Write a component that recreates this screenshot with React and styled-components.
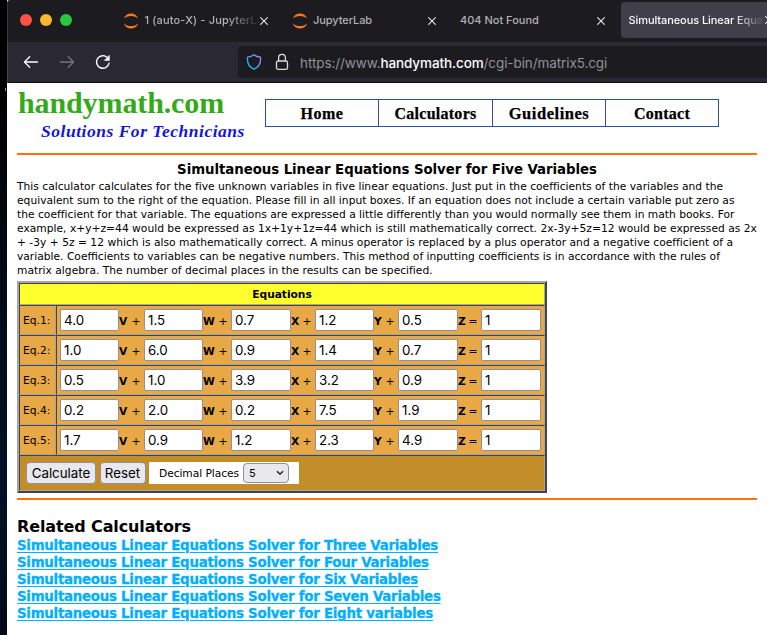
import React from "react";
import styled, { createGlobalStyle } from "styled-components";

const GlobalStyle = createGlobalStyle`
  * { box-sizing: border-box; }
  body { margin: 0; background: #fff; overflow: hidden; }
`;

const verdana = `Verdana, "DejaVu Sans", sans-serif`;
const system = `Inter, sans-serif`;

const Desktop = styled.div`
  display: flex;
  width: 767px;
  height: 635px;
  overflow: hidden;
`;
const Wallpaper = styled.div`
  flex: none;
  width: 7px;
  padding: 88px 0 0 5px;
  background: linear-gradient(#000 0, #000 82px, #02050c 180px, #000c19 320px, #001126 480px, #000b18 635px);
`;
const WallpaperMark = styled.div`
  width: 1px;
  height: 3px;
  background: #999;
`;
const Window = styled.div`
  flex: none;
  width: 760px;
  background: #fff;
`;

const TabBar = styled.div`
  display: flex;
  height: 42px;
  padding-left: 12px;
  background: #1c1b20;
  border-left: 1px solid #39383d;
  border-top-left-radius: 3px;
  font: 500 11px/42px ${system};
  color: #b2b1b4;
  overflow: hidden;
`;
const Lights = styled.div`
  display: flex;
  gap: 8px;
  align-items: center;
  width: 103px;
  height: 40px;
  flex: none;
`;
const Light = styled.i`
  width: 12px;
  height: 12px;
  border-radius: 50%;
  background: ${(p) => p.$color};
`;
const Tab = styled.div`
  display: flex;
  flex: none;
  align-items: center;
  width: ${(p) => p.$width}px;
  height: ${(p) => (p.$active ? 36 : 41)}px;
  margin-top: ${(p) => (p.$active ? 2 : 0)}px;
  padding-left: ${(p) => (p.$active ? 7.5 : 0)}px;
  line-height: ${(p) => (p.$active ? 38 : 43)}px;
  background: ${(p) => (p.$active ? "#413f49" : "transparent")};
  color: ${(p) => (p.$active ? "#fbfbfe" : "#b2b1b4")};
  border-radius: 4px;
  svg { flex: none; display: block; }
`;
const TabTitle = styled.span`
  flex: none;
  width: ${(p) => p.$width}px;
  margin-left: ${(p) => p.$indent || 0}px;
  letter-spacing: ${(p) => p.$spacing || 0}px;
  overflow: hidden;
  white-space: nowrap;
  ${(p) => p.$fade && "mask-image: linear-gradient(90deg, #000 calc(100% - 32px), transparent 100%);"}
`;

const NavBar = styled.div`
  display: flex;
  align-items: center;
  height: 41px;
  padding-left: 15px;
  background: #2a2931;
  border-left: 1px solid #48474d;
  border-bottom: 1px solid #0c0c0d;
  svg { flex: none; display: block; }
`;
const NavIcons = styled.div`
  display: flex;
  align-items: center;
  gap: 20px;
  width: 215px;
  flex: none;
`;
const UrlBar = styled.div`
  display: flex;
  align-items: center;
  flex: 1;
  height: 32px;
  padding-left: 8px;
  background: #1c1b20;
  border-radius: 4px 0 0 4px;
`;
const SecurityIcons = styled.div`
  display: flex;
  align-items: center;
  gap: 11px;
`;
const Url = styled.span`
  margin-left: 9px;
  font: 400 13.5px/32px ${system};
  letter-spacing: -0.09px;
  color: #929196;
  white-space: nowrap;
  padding-top: 2px;
`;
const Host = styled.span`
  color: #fbfbfe;
  font-weight: 500;
  letter-spacing: -0.11px;
`;

const Page = styled.main`
  display: flex;
  flex-direction: column;
  align-items: flex-start;
  width: 750px;
  padding-left: 10px;
  color: #000;
  font-family: ${verdana};
`;
const SiteHeader = styled.header`
  display: flex;
  height: 70px;
`;
const Brand = styled.div`
  width: 248px;
  white-space: nowrap;
  font-family: "Liberation Serif", serif;
`;
const BrandName = styled.div`
  padding: 3px 0 0 1px;
  font-weight: 700;
  font-size: 30px;
  line-height: 33px;
  letter-spacing: -0.11px;
  color: #35a91a;
`;
const Tagline = styled.div`
  padding: 2px 0 0 24px;
  font: italic 700 17.5px/20px "Palatino", "Liberation Serif", serif;
  letter-spacing: 0.52px;
  color: #1414dc;
`;
const Menu = styled.nav`
  display: grid;
  grid-template-columns: 113px 114px 113px 113px;
  width: 454px;
  height: 28px;
  margin-top: 16px;
  border: 1px solid #2b4fa0;
  border-right: 0;
`;
const MenuItem = styled.a`
  height: 26px;
  border-right: 1px solid #2b4fa0;
  text-align: center;
  font: 700 ${(p) => p.$size || 16}px/28px "Palatino", "Liberation Serif", serif;
  letter-spacing: ${(p) => p.$spacing}px;
  -webkit-text-stroke: 0.25px #000;
`;
const Rule = styled.hr`
  width: 740px;
  height: 2px;
  margin: 0;
  border: 0;
  background: #ff7400;
`;
const Title = styled.h1`
  width: 740px;
  margin: 6px 0 0;
  text-align: center;
  font: 700 13.33px/18px ${verdana};
  letter-spacing: -0.05px;
`;
const Intro = styled.p`
  margin: 1px 0 3px;
  font-size: 10.7px;
  line-height: 14px;
  white-space: nowrap;
`;
const Line = styled.span`
  display: block;
  letter-spacing: ${(p) => p.$spacing || 0}px;
`;

const EquationTable = styled.table`
  width: 530px;
  table-layout: fixed;
  border: 2px solid;
  border-color: #a5a5a5 #444 #444 #a5a5a5;
  border-spacing: 0;
  font-size: 10.7px;
`;
const Cell = styled.td`
  height: ${(p) => p.$height || 30}px;
  padding: 0 0 0 ${(p) => p.$pad ?? 3}px;
  border: 1px solid;
  border-color: #444 #a5a5a5 #a5a5a5 #444;
  background: ${(p) => p.$bg || "#e7a845"};
  text-align: left;
  white-space: nowrap;
`;
const Caption = styled(Cell)`
  padding: 0;
  text-align: center;
  font-weight: 700;
  letter-spacing: -0.05px;
`;
const Terms = styled.div`
  display: grid;
  grid-template-columns: 59px 25px 59px 28px 60px 24px 59px 24px 60px 23px 60px;
  align-items: center;
`;
const Field = styled.input`
  width: 100%;
  height: 22px;
  padding: 0 3px;
  border: 1px solid #8f8f9d;
  border-radius: 2px;
  background: #fff;
  color: #000;
  font: 13.33px ${system};
`;
const Operator = styled.span`
  display: flex;
  justify-content: space-between;
  padding: 2px 3.5px 0 0;
`;
const Controls = styled.div`
  display: flex;
  align-items: center;
`;
const Button = styled.button`
  width: ${(p) => p.$width}px;
  height: 22px;
  margin-right: 3.5px;
  padding: 0;
  border: 1px solid #8f8f9d;
  border-radius: 4px;
  background: #e9e9ed;
  color: #000;
  font: 13.33px/20px ${system};
`;
const Precision = styled.label`
  display: flex;
  align-items: center;
  width: 150px;
  height: 22px;
  padding-left: 10px;
  background: #fff;
  letter-spacing: -0.07px;
`;
const Select = styled.span`
  display: flex;
  align-items: center;
  justify-content: space-between;
  width: 46px;
  height: 20px;
  margin-left: 4px;
  padding: 0 4px 0 5px;
  border: 1px solid #8f8f9d;
  border-radius: 4px;
  background: #e9e9ed;
  font: 11px ${system};
`;
const Related = styled.section`
  display: flex;
  flex-direction: column;
  align-items: flex-start;
  margin-top: 17px;
`;
const RelatedTitle = styled.h2`
  margin: 0;
  font: 700 16px/20px ${verdana};
  letter-spacing: -0.12px;
`;
const RelatedLink = styled.a`
  height: 17px;
  font: 700 13.33px/17px ${verdana};
  letter-spacing: -0.24px;
  color: #00b0ff;
  -webkit-text-stroke: 0.3px #00b0ff;
  text-decoration: underline;
  text-decoration-thickness: 1px;
  text-decoration-skip-ink: auto;
  text-underline-offset: 2px;
`;
const Calculator = styled.form`
  margin: 0 0 5px;
`;

const JupyterIcon = () => (
  <svg width="16" height="16" viewBox="0 0 16 16" fill="#f37726">
    <path d="M.8 5.6C2 2.300 4.800.4 8 .4s6 1.900 7.200 5.200C13.300 3.900 10.900 3 8 3S2.700 3.900.8 5.600Z" />
    <path d="M.8 10.400C2 13.700 4.800 15.600 8 15.600s6-1.900 7.200-5.200C13.300 12.100 10.900 13 8 13S2.700 12.100.8 10.400Z" />
  </svg>
);
const CloseIcon = () => (
  <svg width="8" height="8" viewBox="0 0 8 8" stroke="#e6e6e8" strokeWidth="1.100">
    <path d="M.3.3l7.400 7.400M7.700.3L.3 7.700" />
  </svg>
);
const ArrowIcon = ({ forward }) => (
  <svg width="16" height="16" viewBox="0 0 16 16" fill="none" stroke={forward ? "#75747a" : "#fbfbfe"} strokeWidth="1.300" strokeLinecap="round" strokeLinejoin="round">
    <path d={forward ? "M1.500 8h13M9.300 2.700L14.600 8l-5.300 5.300" : "M14.500 8h-13M6.700 2.700L1.400 8l5.300 5.300"} />
  </svg>
);
const ReloadIcon = () => (
  <svg width="16" height="16" viewBox="0 0 16 16" fill="none" stroke="#fbfbfe" strokeWidth="1.400" strokeLinecap="round">
    <path d="M14 9.300A6.300 6.300 0 1 1 12.300 3.500" />
    <path d="M14.400 1.600v4.800H9.600Z" fill="#fbfbfe" strokeWidth=".6" strokeLinejoin="round" />
  </svg>
);
const ShieldIcon = () => (
  <svg width="16" height="16" viewBox="0 0 16 16" fill="none">
    <defs>
      <linearGradient id="shield" x1="0" y1="1" x2="1" y2="0">
        <stop offset="0.2" stopColor="#1fb5f0" />
        <stop offset="0.55" stopColor="#4f9ff5" />
        <stop offset="1" stopColor="#a98cf5" />
      </linearGradient>
    </defs>
    <path d="M8 .8C6.200 2.300 4 3 1.500 3.200 1 8.800 3.200 13.100 8 15.200c4.800-2.100 7-6.400 6.500-12C12 3 9.800 2.300 8 .8Z" stroke="url(#shield)" strokeWidth="1.300" strokeLinejoin="round" />
  </svg>
);
const LockIcon = () => (
  <svg width="18" height="18" viewBox="0 0 18 18" fill="none" stroke="#dcdcdf" strokeWidth="1.300">
    <rect x="3.500" y="8" width="11" height="8.400" rx="1.700" />
    <path d="M5.600 8V4.800a3.400 3.400 0 0 1 6.800 0V8" />
  </svg>
);
const ChevronIcon = () => (
  <svg width="8" height="6" viewBox="0 0 8 6" fill="none" stroke="#111" strokeWidth="1.300">
    <path d="M1 1.200l3 3 3-3" />
  </svg>
);

const intro = [
  ["This calculator calculates for the five unknown variables in five linear equations. Just put in the coefficients of the variables and the", 0.008],
  ["equivalent sum to the right of the equation. Please fill in all input boxes. If an equation does not include a certain variable put zero as", 0.008],
  ["the coefficient for that variable. The equations are expressed a little differently than you would normally see them in math books. For", 0.01],
  ["example, x+y+z=44 would be expressed as 1x+1y+1z=44 which is still mathematically correct. 2x-3y+5z=12 would be expressed as 2x", 0.01],
  ["+ -3y + 5z = 12 which is also mathematically correct. A minus operator is replaced by a plus operator and a negative coefficient of a", 0.01],
  ["variable. Coefficients to variables can be negative numbers. This method of inputting coefficients is in accordance with the rules of", 0],
  ["matrix algebra. The number of decimal places in the results can be specified.", 0.01],
];
const rows = [
  ["4.0", "1.5", "0.7", "1.2", "0.5", "1"],
  ["1.0", "6.0", "0.9", "1.4", "0.7", "1"],
  ["0.5", "1.0", "3.9", "3.2", "0.9", "1"],
  ["0.2", "2.0", "0.2", "7.5", "1.9", "1"],
  ["1.7", "0.9", "1.2", "2.3", "4.9", "1"],
];
const operators = [["V", "+"], ["W", "+"], ["X", "+"], ["Y", "+"], ["Z", "="]];
const related = ["Three Variables", "Four Variables", "Six Variables", "Seven Variables", "Eight variables"];

export default function App() {
  return (
    <Desktop>
      <GlobalStyle />
      <Wallpaper><WallpaperMark /></Wallpaper>
      <Window>
        <TabBar>
          <Lights>
            <Light $color="#ff5147" />
            <Light $color="#ffb62a" />
            <Light $color="#29c73f" />
          </Lights>
          <Tab $width={169}>
            <JupyterIcon />
            <TabTitle $indent={5.5} $width={115.5} $spacing={0.16} $fade>1 (auto-X) - JupyterLa</TabTitle>
            <CloseIcon />
          </Tab>
          <Tab $width={168}>
            <JupyterIcon />
            <TabTitle $indent={5} $width={115} $spacing={-0.08}>JupyterLab</TabTitle>
            <CloseIcon />
          </Tab>
          <Tab $width={161}>
            <TabTitle $width={137}>404 Not Found</TabTitle>
            <CloseIcon />
          </Tab>
          <Tab $width={170} $active>
            <TabTitle $width={136.5} $spacing={-0.08} $fade>Simultaneous Linear Equa</TabTitle>
            <CloseIcon />
          </Tab>
        </TabBar>
        <NavBar>
          <NavIcons>
            <ArrowIcon />
            <ArrowIcon forward />
            <ReloadIcon />
          </NavIcons>
          <UrlBar>
            <SecurityIcons>
              <ShieldIcon />
              <LockIcon />
            </SecurityIcons>
            <Url>https://www.<Host>handymath.com</Host>/cgi-bin/matrix5.cgi</Url>
          </UrlBar>
        </NavBar>
        <Page>
          <SiteHeader>
            <Brand>
              <BrandName>handymath.com</BrandName>
              <Tagline>Solutions For Technicians</Tagline>
            </Brand>
            <Menu>
              <MenuItem $spacing={0.5}>Home</MenuItem>
              <MenuItem $spacing={0.26}>Calculators</MenuItem>
              <MenuItem $size={16.5} $spacing={0.55}>Guidelines</MenuItem>
              <MenuItem $spacing={0.26}>Contact</MenuItem>
            </Menu>
          </SiteHeader>
          <Rule />
          <Title>Simultaneous Linear Equations Solver for Five Variables</Title>
          <Intro>
            {intro.map(([text, spacing]) => <Line key={text} $spacing={spacing}>{text}</Line>)}
          </Intro>
          <Calculator>
            <EquationTable>
              <colgroup><col width="37" /><col /></colgroup>
              <tbody>
                <tr><Caption colSpan={2} $height={22} $bg="#ffff2e">Equations</Caption></tr>
                {rows.map((values, r) => (
                  <tr key={r}>
                    <Cell>Eq.{r + 1}:</Cell>
                    <Cell>
                      <Terms>
                        {values.map((value, i) => (
                          <React.Fragment key={i}>
                            <Field defaultValue={value} />
                            {operators[i] && <Operator><b>{operators[i][0]}</b>{operators[i][1]}</Operator>}
                          </React.Fragment>
                        ))}
                      </Terms>
                    </Cell>
                  </tr>
                ))}
                <tr>
                  <Cell colSpan={2} $height={36} $pad={6} $bg="#c38e2a">
                    <Controls>
                      <Button type="button" $width={70}>Calculate</Button>
                      <Button type="reset" $width={46}>Reset</Button>
                      <Precision>Decimal Places<Select>5<ChevronIcon /></Select></Precision>
                    </Controls>
                  </Cell>
                </tr>
              </tbody>
            </EquationTable>
          </Calculator>
          <Rule />
          <Related>
            <RelatedTitle>Related Calculators</RelatedTitle>
            {related.map((name) => (
              <RelatedLink key={name}>Simultaneous Linear Equations Solver for {name}</RelatedLink>
            ))}
          </Related>
        </Page>
      </Window>
    </Desktop>
  );
}
